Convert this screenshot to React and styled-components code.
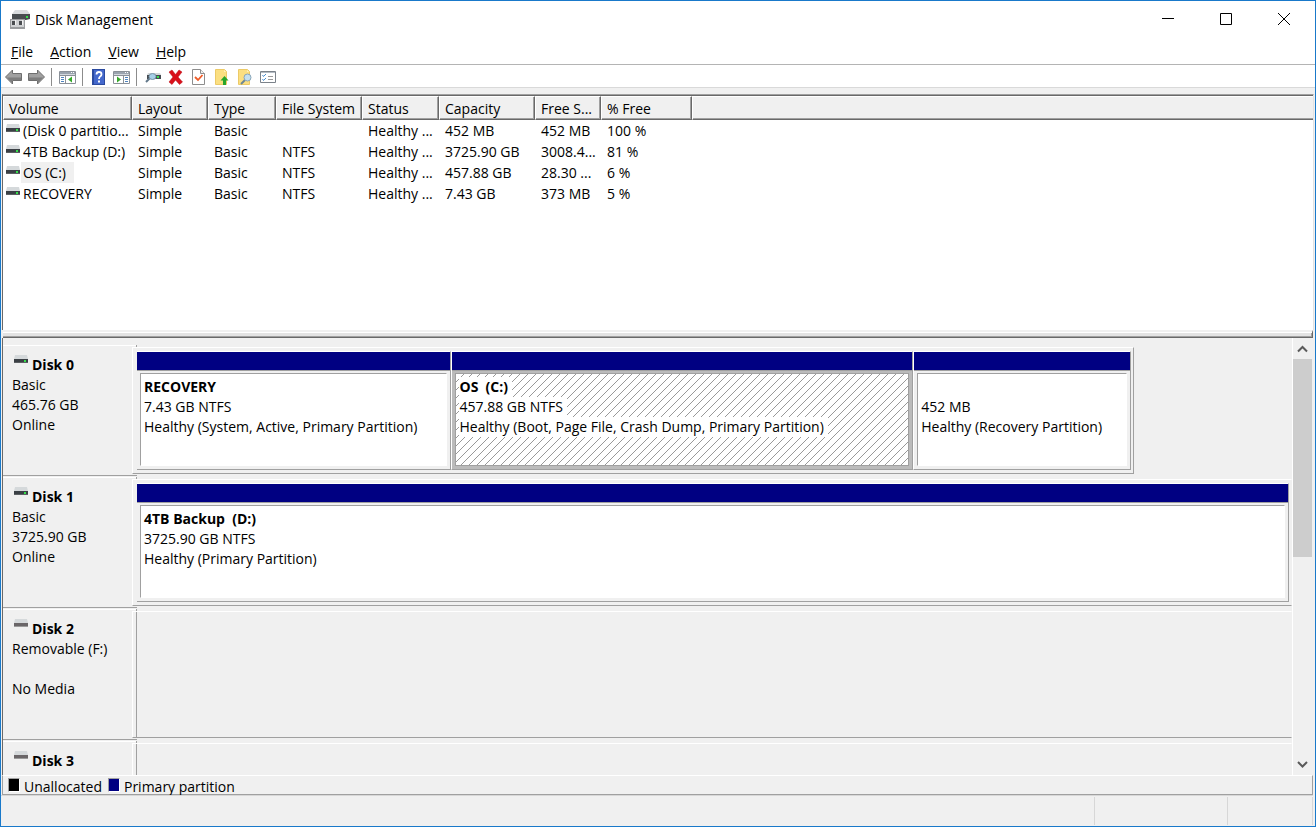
import React from "react";
import styled, { createGlobalStyle, css } from "styled-components";

const GlobalStyle = createGlobalStyle`
  * {
    box-sizing: border-box;
  }
  body {
    margin: 0;
    background: #f0f0f0;
    color: #000;
    font-family: "Open Sans", "Noto Sans", sans-serif;
    font-size: 14px;
    line-height: 20px;
  }
  button {
    padding: 0;
    border: 0;
    background: none;
    color: inherit;
    font: inherit;
  }
`;

const Window = styled.div`
  display: flex;
  flex-direction: column;
  height: 100vh;
  border: 1px solid #1979ca;
  background: #f0f0f0;
  overflow: hidden;
`;

const TitleBar = styled.header`
  display: flex;
  align-items: center;
  flex: none;
  height: 37px;
  padding: 0 2px 0 8px;
  background: #fff;
`;

const Title = styled.h1`
  flex: 1;
  margin: 0 0 0 5px;
  font-size: 14px;
  font-weight: 400;
`;

const WindowButton = styled.button`
  display: flex;
  align-items: center;
  justify-content: center;
  align-self: flex-start;
  width: 58px;
  height: 36px;
`;

const MenuBar = styled.nav`
  display: flex;
  align-items: center;
  flex: none;
  gap: 17px;
  height: 27px;
  padding: 2px 10px 0;
  border-bottom: 1px solid #b4b4b4;
  background: #fff;
`;

const ToolBar = styled.div`
  display: flex;
  align-items: center;
  flex: none;
  height: 23px;
  padding: 2px 0 0 1px;
  border-bottom: 1px solid #d9d9d9;
  background: #fff;
`;

const ToolButton = styled.button`
  display: flex;
  flex: none;
  justify-content: center;
  width: 23px;
`;

const ToolDivider = styled.span`
  width: 1px;
  height: 18px;
  margin: 0 4px 0 3px;
  background: #8c8c8c;
`;

const VolumePane = styled.section`
  flex: none;
  height: 236px;
  margin: 6px 1px 0;
  border-top: 1px solid #a0a0a0;
  border-left: 1px solid #696969;
  border-right: 1px solid #e3e3e3;
  background: #fff;
  overflow: hidden;
`;

const VolumeTable = styled.table`
  width: 100%;
  border-collapse: separate;
  border-spacing: 0;
  border-top: 1px solid #696969;
  table-layout: fixed;
  text-align: left;
`;

const HeadCell = styled.th`
  height: 24px;
  padding: 2px 0 0 5px;
  border-top: 1px solid #fff;
  border-left: 1px solid #fff;
  border-right: ${({ $last }) => ($last ? 0 : "1px solid #696969")};
  border-bottom: 1px solid #696969;
  background: #f0f0f0;
  box-shadow: inset ${({ $last }) => ($last ? 0 : "-1px")} -1px #a0a0a0;
  font-weight: 400;
  white-space: nowrap;
`;

const Cell = styled.td`
  height: 21px;
  padding: 0 0 0 6px;
  line-height: 21px;
  white-space: nowrap;
`;

const NameCell = styled(Cell)`
  padding: 0 0 0 3px;
`;

const VolumeName = styled.div`
  display: flex;
  gap: 1px;

  svg {
    margin-top: 4px;
  }
`;

const VolumeLabel = styled.span`
  padding: 0 ${({ $selected }) => ($selected ? "8px" : "0")} 0 2px;
  background: ${({ $selected }) => ($selected ? "#f0f0f0" : "none")};
`;

const Splitter = styled.div`
  flex: none;
  height: 8px;
  margin: 0 2px;
  border-top: 2px solid #f0f0f0;
  border-right: 1px solid #696969;
  border-bottom: 1px solid #696969;
  background: #e3e3e3;
  box-shadow: inset 0 1px #fff, inset -1px -1px #a0a0a0;
`;

const DiskPane = styled.section`
  display: flex;
  flex: 1;
  min-height: 0;
  margin: 0 2px 0 1px;
  border-left: 1px solid #696969;
`;

const DiskList = styled.div`
  flex: 1;
  padding-top: 7px;
  border-right: 1px solid #fff;
  overflow: hidden;
`;

const DiskRow = styled.article`
  display: flex;
  height: 131px;
  margin-bottom: 1px;
`;

const DiskInfo = styled.div`
  display: flex;
  flex: none;
  flex-direction: column;
  width: 129px;
  padding: 9px 0 0 9px;
  border-top: 1px solid #fff;
  border-bottom: 1px solid #a0a0a0;
`;

const DiskTitle = styled.h2`
  display: flex;
  gap: 4px;
  margin: 0;
  padding-left: 2px;
  font-size: 14px;
  font-weight: 700;
`;

const DiskLine = styled.span`
  min-height: 20px;
`;

const Track = styled.div`
  flex: 1;
  min-width: 0;
  padding-top: 2px;
  background:
    linear-gradient(#fff, #fff) 0 0 / 4px 1px no-repeat,
    linear-gradient(#a0a0a0, #a0a0a0) 0 100% / 4px 1px no-repeat,
    repeating-linear-gradient(#a0a0a0 0 3px, #f0f0f0 3px 5px) 4px 0 / 1px 100% no-repeat;
`;

const GraphFrame = styled.div`
  display: flex;
  width: ${({ $width }) => $width};
  height: 127px;
  border: 1px solid #fff;
  border-right-color: ${({ $open }) => ($open ? "transparent" : "#a0a0a0")};
  border-bottom-color: #a0a0a0;
  padding-left: 3px;
  background: #f0f0f0;
`;

const Partitions = styled.div`
  display: flex;
  flex: 1;
  min-width: 0;
  padding: 3px 2px 3px 0;
  border-left: 1px solid ${({ $empty }) => ($empty ? "#a0a0a0" : "#f0f0f0")};
`;

const Partition = styled.div`
  display: flex;
  flex: ${({ $weight }) => $weight} 1 0;
  flex-direction: column;
  min-width: 0;
  border-top: 1px solid #fff;
  border-right: 1px solid #a0a0a0;
  border-bottom: 1px solid #a0a0a0;

  & + & {
    border-left: 1px solid #fff;
  }
`;

const PartitionBar = styled.div`
  height: 19px;
  border-bottom: 1px solid #a0a0a0;
  background: #000082;
`;

const hatch = css`
  background: linear-gradient(135deg, #fff 47%, #999 47% 53%, #fff 53%) 0 0 / 8px 8px;
`;

const PartitionBody = styled.div`
  flex: 1;
  border: solid ${({ $selected }) => ($selected ? "#bbb" : "#f0f0f0")};
  border-width: 2px 3px 3px;
`;

const PartitionInner = styled.div`
  display: flex;
  flex-direction: column;
  align-items: flex-start;
  height: 100%;
  padding: 3px 0 0 3px;
  border: 1px solid #a0a0a0;
  ${({ $selected }) =>
    $selected
      ? hatch
      : css`
          border-right-color: #fff;
          border-bottom-color: #fff;
          background: #fff;
        `}
`;

const PartitionText = styled.span`
  min-height: 20px;
  padding-right: 4px;
  background: #fff;
  font-weight: ${({ $bold }) => ($bold ? 700 : 400)};
  white-space: pre;
`;

const ScrollBar = styled.div`
  display: flex;
  flex: none;
  flex-direction: column;
  width: 20px;
`;

const ScrollButton = styled.button`
  display: flex;
  align-items: center;
  justify-content: center;
  width: 19px;
  height: 21px;
`;

const ScrollTrack = styled.div`
  flex: 1;
`;

const ScrollThumb = styled.div`
  width: 19px;
  height: 50%;
  background: #cdcdcd;
`;

const Legend = styled.footer`
  display: flex;
  flex: none;
  gap: 6px;
  height: 20px;
  margin: 0 2px 0 1px;
  padding: 2px 0 0 5px;
  border: 1px solid #a0a0a0;
  border-top-color: #fff;
`;

const LegendItem = styled.span`
  display: flex;
  gap: 4px;
  line-height: 18px;
`;

const Swatch = styled.span`
  width: 12px;
  height: 14px;
  border: 1px solid #fff;
  border-top-color: #a0a0a0;
  border-left-color: #a0a0a0;
  background: ${({ $color }) => $color};
`;

const StatusBar = styled.div`
  display: flex;
  flex: none;
  height: 31px;
  margin-right: 2px;
  padding: 1px 0;
  border-top: 1px solid #d7d7d7;
`;

const StatusCell = styled.span`
  flex: ${({ $width }) => ($width ? `0 0 ${$width}` : "1")};
  border-right: 1px solid #d7d7d7;
`;

const volumes = [
  ["(Disk 0 partitio...", "Simple", "Basic", "", "Healthy ...", "452 MB", "452 MB", "100 %"],
  ["4TB Backup (D:)", "Simple", "Basic", "NTFS", "Healthy ...", "3725.90 GB", "3008.4...", "81 %"],
  ["OS (C:)", "Simple", "Basic", "NTFS", "Healthy ...", "457.88 GB", "28.30 ...", "6 %"],
  ["RECOVERY", "Simple", "Basic", "NTFS", "Healthy ...", "7.43 GB", "373 MB", "5 %"],
];

const columns = [
  { label: "Volume", width: 129 },
  { label: "Layout", width: 76 },
  { label: "Type", width: 68 },
  { label: "File System", width: 86 },
  { label: "Status", width: 77 },
  { label: "Capacity", width: 96 },
  { label: "Free S...", width: 66 },
  { label: "% Free", width: 91 },
];

const disks = [
  {
    name: "Disk 0",
    lines: ["Basic", "465.76 GB", "Online"],
    width: "86.4%",
    partitions: [
      { weight: 315, name: "RECOVERY", lines: ["7.43 GB NTFS", "Healthy (System, Active, Primary Partition)"] },
      {
        weight: 462,
        name: "OS  (C:)",
        lines: ["457.88 GB NTFS", "Healthy (Boot, Page File, Crash Dump, Primary Partition)"],
        selected: true,
      },
      { weight: 217, name: "", lines: ["452 MB", "Healthy (Recovery Partition)"] },
    ],
  },
  {
    name: "Disk 1",
    lines: ["Basic", "3725.90 GB", "Online"],
    width: "100%",
    open: true,
    partitions: [
      { weight: 1, name: "4TB Backup  (D:)", lines: ["3725.90 GB NTFS", "Healthy (Primary Partition)"] },
    ],
  },
  { name: "Disk 2", lines: ["Removable (F:)", "", "No Media"], width: "100%", open: true, removable: true, partitions: [] },
  { name: "Disk 3", lines: [], width: "100%", open: true, removable: true, partitions: [] },
];

const DriveSvg = styled.svg`
  flex: none;
`;

const DriveIcon = ({ removable }) => (
  <DriveSvg width="14" height="9" viewBox="0 0 14 9" aria-hidden="true">
    <path d="M1 0h12l1 4H0z" fill="#d5d9db" />
    <path d="M0 4h14v4H0z" fill={removable ? "#6a6668" : "#3b4045"} />
    <path d="M0 7h14v1H0z" fill={removable ? "#9a9a9a" : "#5c6063"} />
    {!removable && <path d="M10 5h2v2h-2z" fill="#35e04a" />}
  </DriveSvg>
);

const AppIcon = () => (
  <svg width="21" height="20" viewBox="0 0 21 20" aria-hidden="true">
    <path d="M6 0h12l3 4H3z" fill="#d9dcde" />
    <path d="M3 4h18v5l-4 1H3z" fill="#484d50" />
    <path d="M17 6h2v2h-2z" fill="#35e04a" />
    <path d="M1 9h15v10H1z" fill="#9a9c9e" />
    <path d="M2 10h13v7H2z" fill="#cfd1d3" />
    <path d="M3 11h3v4H3zM10 11h3v4h-3z" fill="#4a4d50" />
    <path d="M6 10h1v5H6zM13 10h1v5h-1z" fill="#f2f2f2" />
  </svg>
);

const ArrowIcon = ({ right }) => (
  <svg width="17" height="16" viewBox="0 0 17 16" aria-hidden="true">
    <path
      d={right ? "M16.500 8L9.500 1v3.500h-9v7h9V15z" : "M.5 8l7-7v3.500h9v7h-9V15z"}
      fill="#a0a0a0"
      stroke="#6e6e6e"
    />
    <path d={right ? "M1 8.500h14l-5 5V11H1z" : "M16 8.500H2l5 5V11h9z"} fill="#7d7d7d" />
  </svg>
);

const ConsoleIcon = ({ right }) => (
  <svg width="17" height="16" viewBox="0 0 17 16" aria-hidden="true">
    <path d="M.5 2.500h16v12H.5z" fill="#fff" stroke="#8a9098" />
    <path d="M1 3h15v2H1z" fill="#9aa3ae" />
    <path d="M12 3h1v1h-1zM14 3h1v1h-1z" fill="#fff" />
    <path d="M1 6.500h15" stroke="#8a9098" />
    <path d="M1 5.500h15" stroke="#d3d8de" />
    <path d={right ? "M10.500 7v7" : "M6.500 7v7"} stroke="#8a9098" />
    <path
      d={right ? "M12 8.500h3M12 10.500h3M12 12.500h3" : "M2 8.500h3M2 10.500h3M2 12.500h3"}
      stroke="#4f84bf"
    />
    <path d={right ? "M4 7.500v6l4-3z" : "M13 7.500v6l-4-3z"} fill="#35a82a" />
  </svg>
);

const HelpIcon = () => (
  <svg width="13" height="16" viewBox="0 0 13 16" aria-hidden="true">
    <path d="M0 0h13v16H0z" fill="#2b4a9f" />
    <path d="M2 1h10v14H2z" fill="#4468cc" />
    <path
      d="M4.500 5.500q0-2.500 2.500-2.500t2.500 2.200q0 1.400-1.300 2.200Q7 8.300 7 10"
      fill="none"
      stroke="#fff"
      strokeWidth="1.800"
    />
    <path d="M6 11.500h2v2H6z" fill="#fff" />
  </svg>
);

const RescanIcon = () => (
  <svg width="16" height="16" viewBox="0 0 16 16" aria-hidden="true">
    <path d="M3 4h12l1 2H2z" fill="#d4d8da" />
    <path d="M2 6h14v4H2z" fill="#454b50" />
    <path d="M12 7h2v2h-2z" fill="#35e04a" />
    <path d="M5 9l-4 4" stroke="#62788a" strokeWidth="2" />
    <ellipse cx="7.500" cy="7.500" rx="3.500" ry="3" fill="#a5cfe8" stroke="#7894a8" />
  </svg>
);

const DeleteIcon = () => (
  <svg width="15" height="16" viewBox="0 0 15 16" aria-hidden="true">
    <path
      d="M1 3l3-2 3.500 4.500L11 1l3 2-4 5 4.500 5-3 2.500L7.500 11 4 15.500 1 13l4-5z"
      fill="#d9101a"
      stroke="#b80a12"
      strokeWidth=".5"
    />
  </svg>
);

const CheckPageIcon = () => (
  <svg width="13" height="16" viewBox="0 0 13 16" aria-hidden="true">
    <path d="M.5.5h8l4 4v11H.5z" fill="#fff" stroke="#8d8d8d" />
    <path d="M8.500.5v4h4" fill="#eee" stroke="#8d8d8d" />
    <path d="M3 8l3 3 4.500-5" fill="none" stroke="#ef5b28" strokeWidth="1.800" />
  </svg>
);

const FolderIcon = ({ search }) => (
  <svg width="15" height="16" viewBox="0 0 15 16" aria-hidden="true">
    <path d="M1.500.5h9l2 2v13h-11z" fill="#fbdf81" stroke="#ecca67" />
    <path d="M10 1l2 2h-2z" fill="#fff0b8" />
    {search ? (
      <>
        <path d="M8 11l-4 4" stroke="#6c8797" strokeWidth="2" />
        <circle cx="10.500" cy="8.500" r="3.500" fill="#c4e0f0" stroke="#8aa6b8" />
      </>
    ) : (
      <path d="M10.500 7l4 4.500H12V16H9v-4.500H6.500z" fill="#27a52a" />
    )}
  </svg>
);

const OptionsIcon = () => (
  <svg width="16" height="16" viewBox="0 0 16 16" aria-hidden="true">
    <path d="M.5 2.500h15v11H.5z" fill="#fff" stroke="#7b828a" />
    <path d="M1 3h14v1H1z" fill="#b5bcc4" />
    <path d="M2.500 6l1 1.500L6 5M2.500 10l1 1.500L6 9" fill="none" stroke="#4c8fd0" />
    <path d="M8 7.500h5M8 10.500h5" stroke="#9a9a9a" />
  </svg>
);

const Chevron = ({ down }) => (
  <svg width="11" height="8" viewBox="0 0 11 8" aria-hidden="true">
    <path
      d={down ? "M1 1l4.500 4.500L10 1" : "M1 6.500L5.500 2 10 6.500"}
      fill="none"
      stroke="#5a5a5a"
      strokeWidth="2"
    />
  </svg>
);

const Volumes = () => (
  <VolumePane>
    <VolumeTable>
      <colgroup>
        {columns.map(({ label, width }) => (
          <col key={label} width={width} />
        ))}
        <col />
      </colgroup>
      <thead>
        <tr>
          {columns.map(({ label }) => (
            <HeadCell key={label}>{label}</HeadCell>
          ))}
          <HeadCell $last />
        </tr>
      </thead>
      <tbody>
        {volumes.map(([name, ...values]) => (
          <tr key={name}>
            <NameCell>
              <VolumeName>
                <DriveIcon />
                <VolumeLabel $selected={name === "OS (C:)"}>{name}</VolumeLabel>
              </VolumeName>
            </NameCell>
            {values.map((value, i) => (
              <Cell key={i}>{value}</Cell>
            ))}
            <Cell />
          </tr>
        ))}
      </tbody>
    </VolumeTable>
  </VolumePane>
);

const Disk = ({ disk }) => {
  const empty = disk.partitions.length === 0;
  return (
    <DiskRow>
      <DiskInfo>
        <DiskTitle>
          <DriveIcon removable={disk.removable} />
          {disk.name}
        </DiskTitle>
        {disk.lines.map((line, i) => (
          <DiskLine key={i}>{line}</DiskLine>
        ))}
      </DiskInfo>
      <Track>
        <GraphFrame $width={disk.width} $open={disk.open}>
          <Partitions $empty={empty}>
            {disk.partitions.map(({ weight, name, lines, selected }) => (
              <Partition key={lines[0]} $weight={weight}>
                <PartitionBar />
                <PartitionBody $selected={selected}>
                  <PartitionInner $selected={selected}>
                    <PartitionText $bold>{name}</PartitionText>
                    {lines.map((line) => (
                      <PartitionText key={line}>{line}</PartitionText>
                    ))}
                  </PartitionInner>
                </PartitionBody>
              </Partition>
            ))}
          </Partitions>
        </GraphFrame>
      </Track>
    </DiskRow>
  );
};

const App = () => {
  return (
    <>
      <GlobalStyle />
      <Window>
        <TitleBar>
          <AppIcon />
          <Title>Disk Management</Title>
          <WindowButton aria-label="Minimize">
            <svg width="12" height="12"><path d="M0 5.500h12" stroke="#000" /></svg>
          </WindowButton>
          <WindowButton aria-label="Maximize">
            <svg width="12" height="12"><path d="M.5.5h11v11H.5z" fill="none" stroke="#000" /></svg>
          </WindowButton>
          <WindowButton aria-label="Close">
            <svg width="12" height="12"><path d="M0 0l12 12M12 0L0 12" stroke="#000" /></svg>
          </WindowButton>
        </TitleBar>
        <MenuBar>
          {["File", "Action", "View", "Help"].map((item) => (
            <button key={item}>
              <u>{item[0]}</u>
              {item.slice(1)}
            </button>
          ))}
        </MenuBar>
        <ToolBar>
          <ToolButton aria-label="Back"><ArrowIcon /></ToolButton>
          <ToolButton aria-label="Forward"><ArrowIcon right /></ToolButton>
          <ToolDivider />
          <ToolButton aria-label="Show console tree"><ConsoleIcon /></ToolButton>
          <ToolDivider />
          <ToolButton aria-label="Help"><HelpIcon /></ToolButton>
          <ToolButton aria-label="Show action pane"><ConsoleIcon right /></ToolButton>
          <ToolDivider />
          <ToolButton aria-label="Rescan"><RescanIcon /></ToolButton>
          <ToolButton aria-label="Delete"><DeleteIcon /></ToolButton>
          <ToolButton aria-label="Properties"><CheckPageIcon /></ToolButton>
          <ToolButton aria-label="Open"><FolderIcon /></ToolButton>
          <ToolButton aria-label="Explore"><FolderIcon search /></ToolButton>
          <ToolButton aria-label="Settings"><OptionsIcon /></ToolButton>
        </ToolBar>
        <Volumes />
        <Splitter />
        <DiskPane>
          <DiskList>
            {disks.map((disk) => (
              <Disk key={disk.name} disk={disk} />
            ))}
          </DiskList>
          <ScrollBar>
            <ScrollButton aria-label="Scroll up"><Chevron /></ScrollButton>
            <ScrollTrack>
              <ScrollThumb />
            </ScrollTrack>
            <ScrollButton aria-label="Scroll down"><Chevron down /></ScrollButton>
          </ScrollBar>
        </DiskPane>
        <Legend>
          <LegendItem><Swatch $color="#000" />Unallocated</LegendItem>
          <LegendItem><Swatch $color="#000082" />Primary partition</LegendItem>
        </Legend>
        <StatusBar>
          <StatusCell />
          <StatusCell $width="133px" />
          <StatusCell $width="85px" />
        </StatusBar>
      </Window>
    </>
  );
};

export default App;
